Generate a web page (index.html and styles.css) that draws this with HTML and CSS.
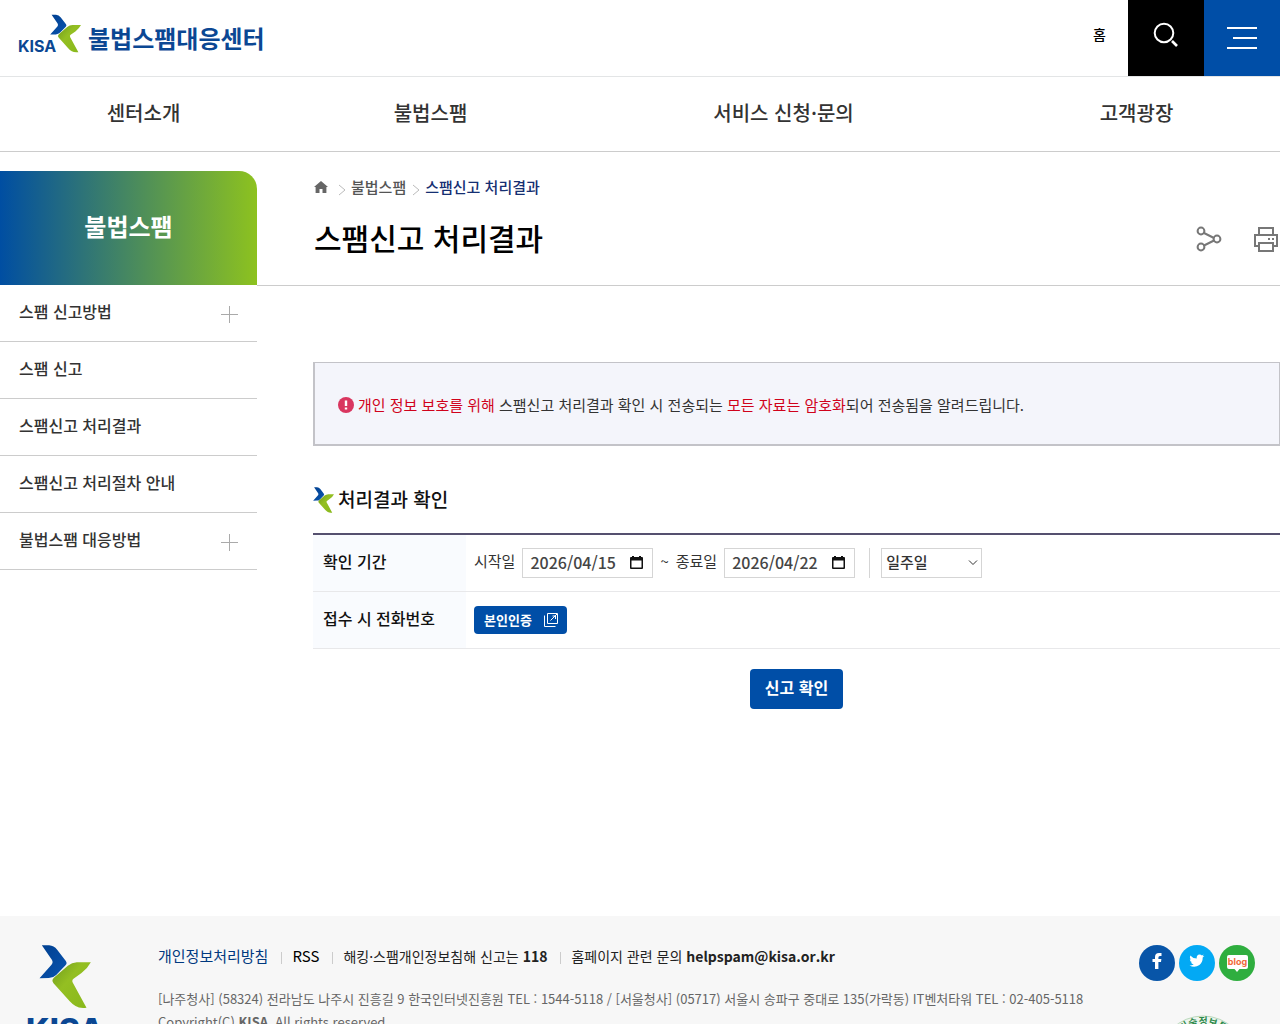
FILE: index.html
```html
<!DOCTYPE html>
<html lang="ko">
<head>
<meta charset="utf-8">
<meta name="viewport" content="width=device-width, initial-scale=1">
<title>스팸신고 처리결과 | 불법스팸대응센터</title>
<link rel="stylesheet" href="styles.css">
</head>
<body>
<svg class="defs" width="0" height="0" aria-hidden="true">
  <linearGradient id="blue" x1="0" y1="0" x2="1" y2="1"><stop offset="0" stop-color="#003f8f"/><stop offset="1" stop-color="#0a55b0"/></linearGradient>
  <linearGradient id="green" x1="0" y1="0" x2="1" y2="1"><stop offset="0" stop-color="#6f9a1c"/><stop offset=".4" stop-color="#94bf22"/><stop offset="1" stop-color="#88b81c"/></linearGradient>
  <symbol id="mark" viewBox="123 135 155 189">
    <path fill="url(#blue)" d="M131 136h22q14 1 24 13l26 34q5 7-1 13l-28 29q-9 9-22 9l-28 1 36-41q6-7 1-15z"/>
    <path fill="url(#green)" d="M278 187q-10 19-28 32l-24 17q-6 5-2 12l41 75q-20 3-33-5-10-6-18-15l-48-53q-7-9 1-17l42-36q12-9 27-10z"/>
  </symbol>
</svg>

<header class="header">
  <div class="topbar">
    <a class="logo" href="#"><span class="logo-kisa">KISA</span><svg class="logo-mark" aria-hidden="true"><use href="#mark"/></svg><span class="logo-name">불법스팸대응센터</span></a>
    <a class="home-link" href="#">홈</a>
    <button class="tool search" type="button" aria-label="검색">
      <svg width="26" height="26" viewBox="0 0 26 26" fill="none" stroke="#fff" stroke-width="2"><circle cx="11" cy="11" r="9.3"/><path d="M19 19l5 5" stroke-width="2.6"/></svg>
    </button>
    <button class="tool menu" type="button" aria-label="전체메뉴">
      <svg width="30" height="22" viewBox="0 0 30 22" stroke="#fff" stroke-width="2"><path d="M0 1h30M6 11h24M0 21h30"/></svg>
    </button>
  </div>
  <nav class="gnb" aria-label="주메뉴">
    <a href="#">센터소개</a><a href="#">불법스팸</a><a href="#">서비스 신청·문의</a><a href="#">고객광장</a>
  </nav>
</header>

<div class="layout">
  <aside class="side">
    <h2 class="side-title">불법스팸</h2>
    <ul class="side-menu">
      <li><a href="#">스팸 신고방법<i class="plus"></i></a></li>
      <li><a href="#">스팸 신고</a></li>
      <li><a href="#">스팸신고 처리결과</a></li>
      <li><a href="#">스팸신고 처리절차 안내</a></li>
      <li><a href="#">불법스팸 대응방법<i class="plus"></i></a></li>
    </ul>
  </aside>

  <main class="content">
    <div class="page-head">
      <nav class="crumbs" aria-label="현재 위치">
        <a href="#" aria-label="홈"><svg width="14" height="12" viewBox="0 0 14 12"><path fill="#666" d="M7 0l7 6h-1.600v6H8.500V8h-3v4H1.600V6H0z"/></svg></a>
        <svg class="sep" viewBox="0 0 8 12"><path d="M1 1l6 5-6 5"/></svg>
        <a href="#">불법스팸</a>
        <svg class="sep" viewBox="0 0 8 12"><path d="M1 1l6 5-6 5"/></svg>
        <a class="current" href="#">스팸신고 처리결과</a>
      </nav>
      <div class="title-row">
        <h1>스팸신고 처리결과</h1>
        <button class="icon-btn" type="button" aria-label="공유">
          <svg width="26" height="26" viewBox="0 0 26 26" fill="none" stroke="#777" stroke-width="2"><circle cx="5" cy="5" r="3.400"/><circle cx="5" cy="21" r="3.400"/><circle cx="21" cy="13" r="3.400"/><path d="M8 7l10 5M8 19.500l10-5"/></svg>
        </button>
        <button class="icon-btn" type="button" aria-label="인쇄">
          <svg width="24" height="26" viewBox="0 0 24 26" fill="none" stroke="#777" stroke-width="2"><path d="M5 8V2h14v6M5 20H1V9h22v11h-4M5 17h14v8H5z"/><path d="M14 13h2M18 13h2"/></svg>
        </button>
      </div>
    </div>

    <p class="notice">
      <svg width="16" height="16" viewBox="0 0 16 16" aria-hidden="true"><circle cx="8" cy="8" r="8" fill="#d9365f"/><path d="M8 3.500v5.500M8 10.500v2" stroke="#fff" stroke-width="2.400"/></svg>
      <span><em>개인 정보 보호를 위해</em> 스팸신고 처리결과 확인 시 전송되는 <em>모든 자료는 암호화</em>되어 전송됨을 알려드립니다.</span>
    </p>

    <h2 class="section-title"><svg width="21" height="26" aria-hidden="true"><use href="#mark"/></svg>처리결과 확인</h2>

    <form>
      <table class="form-table">
        <tr>
          <th scope="row">확인 기간</th>
          <td>
            <div class="fields">
              <label for="from">시작일</label>
              <span class="date"><input id="from" type="text" value="2026/04/15"><svg width="13" height="14" viewBox="0 0 13 14"><path fill="#111" fill-rule="evenodd" d="M2 0h2v1h5V0h2v1h1q1 0 1 1v10q0 1-1 1H1q-1 0-1-1V2q0-1 1-1h1zM1.500 4.500v7h10v-7z"/></svg></span>
              <span class="tilde">~</span>
              <label for="to">종료일</label>
              <span class="date"><input id="to" type="text" value="2026/04/22"><svg width="13" height="14" viewBox="0 0 13 14"><path fill="#111" fill-rule="evenodd" d="M2 0h2v1h5V0h2v1h1q1 0 1 1v10q0 1-1 1H1q-1 0-1-1V2q0-1 1-1h1zM1.500 4.500v7h10v-7z"/></svg></span>
              <span class="period"><select aria-label="기간 선택"><option>일주일</option></select></span>
            </div>
          </td>
        </tr>
        <tr>
          <th scope="row">접수 시 전화번호</th>
          <td><button class="btn-verify" type="button">본인인증<svg width="14" height="14" viewBox="0 0 14 14" fill="none" stroke="#fff"><path d="M3.500.5h10v10h-10zM.5 2.500v11h11M6.500 7.500L13 1M8.500 3h3v3"/></svg></button></td>
        </tr>
      </table>
      <div class="actions"><button class="btn-submit" type="button">신고 확인</button></div>
    </form>
  </main>
</div>

<footer class="footer">
  <a class="footer-logo" href="#"><svg width="52" height="63" aria-hidden="true"><use href="#mark"/></svg><span>KISA</span></a>
  <div class="footer-info">
    <ul class="footer-links">
      <li><a class="privacy" href="#">개인정보처리방침</a></li>
      <li><a class="rss" href="#">RSS</a></li>
      <li>해킹·스팸개인정보침해 신고는 <b>118</b></li>
      <li>홈페이지 관련 문의 <b>helpspam@kisa.or.kr</b></li>
    </ul>
    <address>[나주청사] (58324) 전라남도 나주시 진흥길 9 한국인터넷진흥원 TEL : 1544-5118 / [서울청사] (05717) 서울시 송파구 중대로 135(가락동) IT벤처타워 TEL : 02-405-5118<br>Copyright(C) <b>KISA</b>. All rights reserved.</address>
  </div>
  <div class="footer-side">
    <div class="social">
      <a class="facebook" href="#" aria-label="페이스북"><svg width="36" height="36" viewBox="0 0 36 36"><path fill="#fff" d="M16 24v-7h-2.500v-3H16v-2q0-4 4-4h2.500v3h-1.600q-1.500 0-1.500 1.500V14h3l-.4 3h-2.600v7z"/></svg></a>
      <a class="twitter" href="#" aria-label="트위터"><svg width="36" height="36" viewBox="0 0 36 36"><path fill="#fff" d="M10.500 20.500q2.400.2 4.200-1.200-2.100-.2-2.800-2h1.300q-2.400-.8-2.400-3.100l1.300.4q-2-1.700-.8-4.200 2.600 3 6.400 3.200-.5-4 3-4.200 1.300 0 2.200 1l1.900-.8-1.200 1.700 1.700-.4-1.600 1.700q.1 4.700-3.300 7.500-4.800 3.300-9.900.4z"/></svg></a>
      <a class="blog" href="#" aria-label="블로그"><svg width="36" height="36" viewBox="0 0 36 36"><path fill="#fff" d="M10 10h17q2 0 2 2v10q0 2-2 2h-6.500L18 27l-2.500-3H10q-2 0-2-2V12q0-2 2-2z"/><text x="18.500" y="20" text-anchor="middle">blog</text></svg></a>
    </div>
    <svg class="seal" width="90" height="90" viewBox="0 0 90 90" aria-hidden="true"><circle cx="45" cy="45" r="44" fill="#eef5ee" stroke="#b9d8bb"/><circle cx="45" cy="45" r="33" fill="#fff" stroke="#b9d8bb"/><path id="arc" fill="none" d="M10 45a35 35 0 0 1 70 0"/><text><textPath href="#arc" startOffset="50%" text-anchor="middle">과학기술정보통신부</textPath></text></svg>
  </div>
</footer>
</body>
</html>
```
FILE: styles.css
```css
* { box-sizing: border-box; }
body {
  margin: 0;
  background: #fff;
  color: #333;
  font-family: "Noto Sans CJK KR", "Noto Sans", sans-serif;
  font-size: 15px;
  line-height: 24px;
}
a { color: inherit; text-decoration: none; }
h1, h2, p, ul { margin: 0; padding: 0; }
ul { list-style: none; }
button, input, select { font: inherit; color: inherit; margin: 0; }
button { border: 0; padding: 0; cursor: pointer; }
svg { display: block; flex: none; }
.defs { position: absolute; }

/* header */
.topbar { display: flex; align-items: stretch; height: 77px; border-bottom: 1px solid #e3e5e6; }
.logo { display: flex; align-items: flex-start; margin-right: auto; padding: 14px 0 0 18px; color: #0b4793; }
.logo-kisa { padding-top: 20px; width: 32px; white-space: nowrap; font: 700 16px/24px Inter, sans-serif; }
.logo-mark { width: 31px; height: 39px; }
.logo-name { padding: 8px 0 0 7px; font-size: 24px; line-height: 32px; font-weight: 700; }
.home-link { padding: 22px 22px 0; color: #000; font-size: 14px; font-weight: 500; }
.tool { display: grid; place-items: center; width: 76px; height: 76px; }
.search { background: #000; padding-bottom: 6px; }
.menu { background: #004ea7; }
.gnb { display: grid; grid-template-columns: 287fr 287fr 419fr 287fr; height: 75px; border-bottom: 1px solid #ccc; }
.gnb a { text-align: center; font-size: 20px; line-height: 71px; font-weight: 500; }

/* layout */
.layout { display: flex; min-height: 764px; padding-top: 19px; }
.side { flex: none; width: 257px; }
.side-title {
  height: 114px;
  border-radius: 0 18px 0 0;
  background: linear-gradient(90deg, #004ea2, #8dc21f);
  color: #fff;
  text-align: center;
  font-size: 24px;
  line-height: 109px;
  font-weight: 700;
}
.side-menu a {
  display: flex;
  justify-content: space-between;
  height: 57px;
  padding: 0 19px;
  border-bottom: 1px solid #ccc;
  font-size: 16px;
  line-height: 53px;
  font-weight: 500;
}
.plus {
  width: 17px;
  height: 17px;
  margin-top: 21px;
  background: linear-gradient(#aaa, #aaa) center / 17px 1px no-repeat, linear-gradient(#aaa, #aaa) center / 1px 17px no-repeat;
}

/* page heading */
.content { flex: 1; min-width: 0; }
.page-head { height: 115px; padding: 4px 0 0 57px; border-bottom: 1px solid #ccc; }
.crumbs { display: flex; align-items: center; height: 24px; color: #555; font-weight: 500; }
.crumbs .current { color: #152f72; }
.sep { width: 8px; height: 12px; margin: 6px 5px 0 6px; fill: none; stroke: #bbb; }
.crumbs a:first-child { margin-right: 4px; }
.title-row { display: flex; align-items: center; gap: 32px; margin-top: 16px; padding-right: 2px; }
h1 { margin-right: auto; color: #000; font-size: 30px; line-height: 44px; font-weight: 500; }
.icon-btn { padding-top: 3px; background: none; }

/* body */
.notice {
  display: flex;
  align-items: center;
  gap: 4px;
  height: 84px;
  margin: 76px 0 0 56px;
  padding: 2px 24px 0 23px;
  border: 1px solid #c3c3c8;
  border-width: 1px 1px 2px 2px;
  background: #f4f5fb;
}
.notice em { color: #d0021b; font-style: normal; }
.section-title { display: flex; gap: 4px; margin: 41px 0 0 56px; height: 46px; color: #111; font-size: 19px; line-height: 24px; font-weight: 500; }
form { margin-left: 56px; }
.form-table { width: 100%; border-collapse: collapse; border-top: 2px solid #55506f; }
.form-table th { width: 153px; height: 57px; padding: 0 0 3px 10px; background: #f9fbfe; color: #111; text-align: left; font-size: 16px; font-weight: 500; }
.form-table td { padding: 0 8px; }
.form-table tr { border-bottom: 1px solid #e8e8ea; }
.fields { display: flex; align-items: center; gap: 7px; }
.fields label, .tilde { padding-bottom: 4px; }
.date { display: flex; align-items: center; width: 131px; height: 30px; padding: 0 9px 0 7px; border: 1px solid #d5d5d5; }
.date input { flex: 1; min-width: 0; border: 0; padding: 0 0 2px; background: none; font-size: 16px; font-weight: 500; color: #444; }
.period { margin-left: 7px; padding-left: 11px; border-left: 1px solid #d5d5d5; }
.period select {
  display: block;
  appearance: none;
  width: 101px;
  height: 30px;
  padding: 0 4px 2px;
  border: 1px solid #d5d5d5;
  border-radius: 0;
  font-weight: 500;
  background: #fff url("data:image/svg+xml,%3Csvg xmlns='http://www.w3.org/2000/svg' width='10' height='6' fill='none' stroke='%23333'%3E%3Cpath d='M1 .5l4 4 4-4'/%3E%3C/svg%3E") right 3px center no-repeat;
}
.btn-verify { display: flex; align-items: center; gap: 12px; height: 28px; padding: 0 9px 0 10px; border-radius: 4px; background: #004ea7; color: #fff; font-size: 13px; font-weight: 700; }
.actions { display: flex; justify-content: center; margin-top: 20px; }
.btn-submit { height: 40px; padding: 0 15px 4px; border-radius: 4px; background: #004ea7; color: #fff; font-size: 16px; font-weight: 700; }

/* footer */
.footer { display: flex; padding: 28px 25px 0 24px; background: #f7f7f7; }
.footer-logo { display: flex; flex-direction: column; align-items: center; gap: 3px; width: 82px; margin-right: 52px; padding-top: 1px; color: #0b4793; font: 800 32px/40px Inter, sans-serif; }
.footer-info { flex: 1; min-width: 0; }
.footer-links { display: flex; font-size: 14px; color: #222; }
.footer-links li { display: flex; align-items: center; gap: 4px; }
.footer-links li + li::before { content: ""; width: 1px; height: 12px; margin: 4px 6px 0 13px; background: #ccc; }
.privacy { color: #00397f; font-size: 15px; }
.rss { color: #000; font-size: 15px; }
address { margin-top: 19px; color: #666; font-size: 13px; line-height: 23px; font-style: normal; white-space: nowrap; }
.footer-side { display: flex; flex-direction: column; align-items: center; gap: 34px; margin-top: 1px; }
.social { display: flex; gap: 4px; }
.social a { width: 36px; height: 36px; border-radius: 50%; }
.facebook { background: #0855a8; }
.twitter { background: #03a9f4; }
.blog { background: #2fae3f; }
.blog text { font: 700 9px Inter, sans-serif; fill: #f26a3a; }
.seal { margin-left: 12px; }
.seal text { font: 700 10px "Noto Sans CJK KR", sans-serif; fill: #2f8a4c; }
```
